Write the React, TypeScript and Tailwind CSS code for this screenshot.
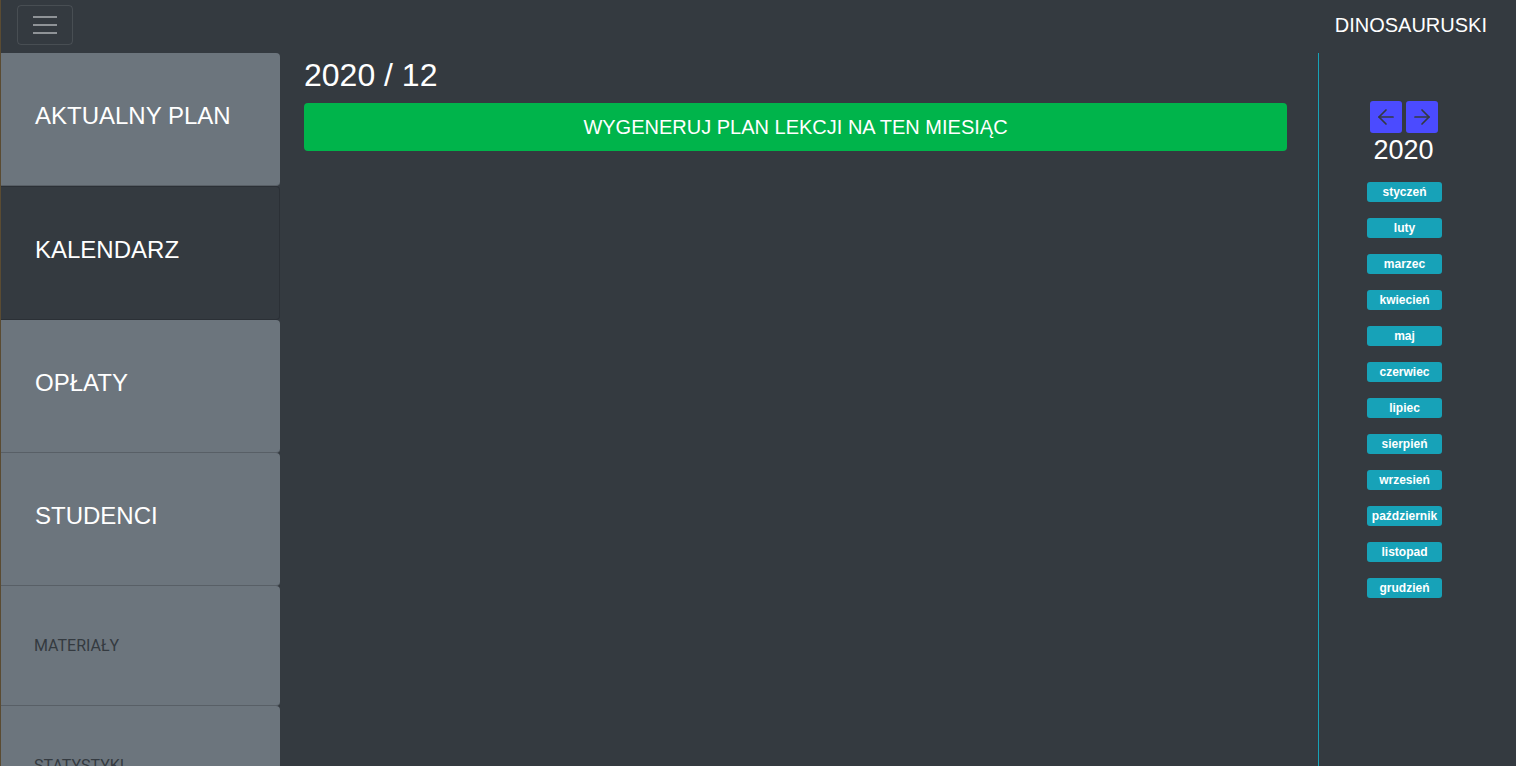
import { ArrowLeft, ArrowRight } from 'lucide-react';

const menu = [
  { label: 'AKTUALNY PLAN', active: false, big: true },
  { label: 'KALENDARZ', active: true, big: true },
  { label: 'OPŁATY', active: false, big: true },
  { label: 'STUDENCI', active: false, big: true },
  { label: 'MATERIAŁY', active: false, big: false },
  { label: 'STATYSTYKI', active: false, big: false },
];

const months = [
  'styczeń',
  'luty',
  'marzec',
  'kwiecień',
  'maj',
  'czerwiec',
  'lipiec',
  'sierpień',
  'wrzesień',
  'październik',
  'listopad',
  'grudzień',
];

export default function App() {
  return (
    <div className="h-[766px] overflow-hidden bg-[#343a40] border-l border-[#5a4b32] font-['Liberation_Sans',Arial,sans-serif] text-white">
      {/* Top bar */}
      <div className="flex h-[53px] items-start justify-between">
        <button className="ml-[16px] mt-[5px] flex h-[40px] w-[56px] flex-col items-center justify-center gap-[6px] rounded-[4px] border border-white/10">
          <span className="block h-[2px] w-[24px] bg-[#8f9397]" />
          <span className="block h-[2px] w-[24px] bg-[#8f9397]" />
          <span className="block h-[2px] w-[24px] bg-[#8f9397]" />
        </button>
        <div className="mr-[29px] mt-[13px] text-[20px] leading-[24px]">DINOSAURUSKI</div>
      </div>

      <div className="flex">
        {/* Sidebar */}
        <div className="flex w-[279px] flex-col">
          {menu.map((item) => (
            <div
              key={item.label}
              className={
                item.active
                  ? 'flex h-[134px] items-center rounded-r-[4px] border border-l-0 border-[#2b3036] bg-[#343a40] pb-[6px] pl-[34px] text-[24px]'
                  : item.big
                    ? 'flex h-[133px] items-center rounded-r-[4px] border-b border-[#585f66] bg-[#6c757d] pb-[7px] pl-[34px] text-[24px]'
                    : "flex h-[120px] items-center rounded-r-[4px] border-b border-[#585f66] bg-[#6c757d] pl-[33px] font-['Roboto',sans-serif] text-[16px] text-[#343a40]"
              }
            >
              {item.label}
            </div>
          ))}
        </div>

        {/* Main */}
        <div className="flex-1 pl-6 pr-[31px]">
          <h1 className="mt-[3px] text-[32px] leading-[38px]">2020 / 12</h1>
          <button className="mt-[9px] flex h-[48px] w-full items-center justify-center rounded-[4px] bg-[#00b44b] text-[20px]">
            WYGENERUJ PLAN LEKCJI NA TEN MIESIĄC
          </button>
        </div>

        {/* Year / month picker */}
        <div className="flex h-[713px] w-[198px] flex-col items-center border-l border-[#17a2b8] pr-[28px] pt-[48px]">
          <div className="flex gap-[4px]">
            <button className="flex h-[32px] w-[32px] items-center justify-center rounded-[3px] bg-[#4b4bff] text-[#343a40]">
              <ArrowLeft size={24} strokeWidth={1.7} />
            </button>
            <button className="flex h-[32px] w-[32px] items-center justify-center rounded-[3px] bg-[#4b4bff] text-[#343a40]">
              <ArrowRight size={24} strokeWidth={1.7} />
            </button>
          </div>
          <div className="mt-[1px] text-[27px] leading-[32px]">2020</div>
          <div className="ml-[2px] mt-[16px] flex flex-col gap-[16px]">
            {months.map((m) => (
              <span
                key={m}
                className="flex h-[20px] w-[75px] items-center justify-center rounded-[3px] bg-[#17a2b8] text-[12px] font-bold"
              >
                {m}
              </span>
            ))}
          </div>
        </div>
      </div>
    </div>
  );
}
